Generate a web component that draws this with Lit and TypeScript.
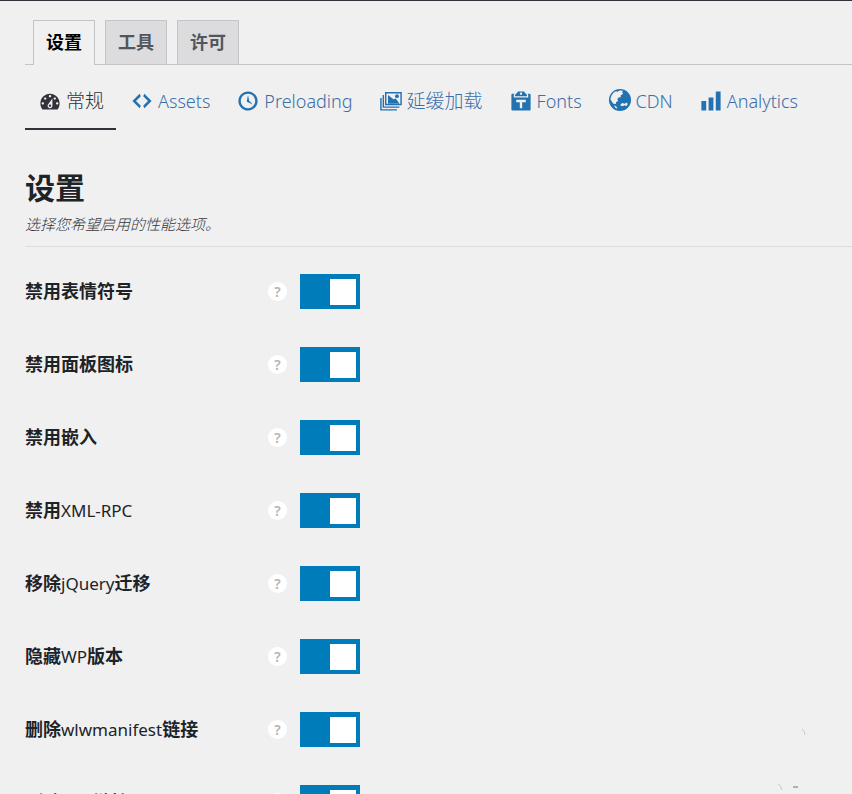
import { LitElement, html, css, svg } from "lit";
import { customElement } from "lit/decorators.js";
import { classMap } from "lit/directives/class-map.js";

const icons = {
  dashboard: svg`<path fill-rule="evenodd" d="M3.76 17h12.48C17.34 15.6 18 13.9 18 12c0-4.420-3.580-8-8-8s-8 3.580-8 8c0 1.890.66 3.630 1.760 5zM10 5c.55 0 1 .45 1 1s-.45 1-1 1-1-.45-1-1 .45-1 1-1zM6 7c.55 0 1 .45 1 1s-.45 1-1 1-1-.45-1-1 .45-1 1-1zm8 0c.55 0 1 .45 1 1s-.45 1-1 1-1-.45-1-1 .45-1 1-1zm-5.370 5.550L12 8v6c0 1.100-.9 2-2 2s-2-.9-2-2c0-.57.24-1.080.63-1.450zM4 11c.55 0 1 .45 1 1s-.45 1-1 1-1-.45-1-1 .45-1 1-1zm12 0c.55 0 1 .45 1 1s-.45 1-1 1-1-.45-1-1 .45-1 1-1zm-5 3c0-.55-.45-1-1-1s-1 .45-1 1 .45 1 1 1 1-.45 1-1z"/>`,
  code: svg`<path d="M9 6l-4 4 4 4-1 2-6-6 6-6zm2 8l4-4-4-4 1-2 6 6-6 6z"/>`,
  clock: svg`<path d="M10 2c4.420 0 8 3.580 8 8s-3.580 8-8 8-8-3.580-8-8 3.580-8 8-8zm0 14c3.310 0 6-2.690 6-6s-2.690-6-6-6-6 2.690-6 6 2.690 6 6 6zm-.71-5.290c.07.05.14.1.23.15l-.02.02L14 13l-3.030-3.190L10 5l-.97 4.810h.01c0 .02-.01.05-.02.09S9 9.970 9 10c0 .28.1.52.29.71z"/>`,
  images: svg`<path fill-rule="evenodd" d="M5 2.500h14v11H5zm1.200 1.200v8.600h11.600V3.700zM3 5h1.200v9.500H17v1.200H3zM1 7.500h1.200v9.300H15V18H1zM7.500 5l4.500 3.500 2-.5 3 4H7.500z"/><circle cx="15" cy="6" r="1.600"/>`,
  fonts: svg`<path fill-rule="evenodd" d="M12.380 2L15 5v1H5V5l2.640-3h4.740zM10 5c.55 0 1-.44 1-1 0-.55-.45-1-1-1s-1 .45-1 1c0 .56.45 1 1 1zm5.450-1H17c.55 0 1 .45 1 1v12c0 .56-.45 1-1 1H3c-.55 0-1-.44-1-1V5c0-.55.45-1 1-1h1.550L4 4.630V7h12V4.630zM14 11V9H6v2h3v5h2v-5h3z"/>`,
  globe: svg`<path fill-rule="evenodd" d="M10 0a9.200 9.200 0 1 0 0 18.400A9.200 9.200 0 0 0 10 0zM2 8.500C2.300 5.500 4 3 6.500 1.800L8 2.200 9.500 1.200l3 .3-.8 1.500 1 1-2 1.200-.2 1.600-1.800.2-1 1.500.8 1.500-1.700.8-.3 1.800-2-.3L2.800 10zM10 13.500l1.800-1.800 2.200.5 1.500-1 1 1.300-1.200 1.700-1.800-.7-1.300.8zM5 13.500l2 1 .8 2-1.500-.7z"/>`,
  chart: svg`<path d="M18 18V2h-4v16h4zm-6 0V7H8v11h4zm-6 0v-8H2v8h4z"/>`,
};

const tabs = ["设置", "工具", "许可"];

const sections: { icon: keyof typeof icons; text: string }[] = [
  { icon: "dashboard", text: "常规" },
  { icon: "code", text: "Assets" },
  { icon: "clock", text: "Preloading" },
  { icon: "images", text: "延缓加载" },
  { icon: "fonts", text: "Fonts" },
  { icon: "globe", text: "CDN" },
  { icon: "chart", text: "Analytics" },
];

const options = [
  "禁用表情符号",
  "禁用面板图标",
  "禁用嵌入",
  "禁用XML-RPC",
  "移除jQuery迁移",
  "隐藏WP版本",
  "删除wlwmanifest链接",
  "删除RSD链接",
];

@customElement("option-row")
class OptionRow extends LitElement {
  static properties = { text: { type: String } };
  declare text: string;

  static styles = css`
    :host {
      display: grid;
      grid-template-columns: 243px 19px 73px;
      align-items: center;
      height: 73px;
    }
    .name {
      padding-bottom: 1px;
      font-size: 18px;
      line-height: 24px;
      font-weight: 700;
      color: #1d2327;
    }
    .latin {
      font-size: 17px;
      font-weight: 400;
    }
    .help {
      width: 19px;
      height: 19px;
      padding: 0;
      border: 0;
      border-radius: 50%;
      background: #fff;
      color: #b4b4b4;
      font: 600 14px/19px "Noto Sans", sans-serif;
      text-align: center;
    }
    .switch {
      appearance: none;
      display: flex;
      align-items: center;
      box-sizing: border-box;
      width: 60px;
      height: 35px;
      margin: 0 0 0 13px;
      padding: 0 4px;
      background: #ccc;
    }
    .switch::before {
      content: "";
      width: 26px;
      height: 26px;
      background: #fff;
    }
    .switch:checked {
      justify-content: flex-end;
      background: #007cba;
    }
  `;

  render() {
    const parts = this.text.split(/([A-Za-z-]+)/);
    return html`
      <label class="name" for="toggle"
        >${parts.map((p, i) => (i % 2 ? html`<span class="latin">${p}</span>` : p))}</label
      >
      <button class="help" type="button">?</button>
      <input class="switch" id="toggle" type="checkbox" checked />
    `;
  }
}

@customElement("app-root")
class AppRoot extends LitElement {
  static styles = css`
    :host {
      display: block;
      position: relative;
      box-sizing: border-box;
      height: 100vh;
      overflow: hidden;
      border-top: 1px solid #32323a;
      padding: 19px 0 0 25px;
      background: #f0f0f1;
      color: #32373c;
      font-family: "Noto Sans", "Noto Sans CJK SC", sans-serif;
    }
    .tabs {
      display: flex;
      gap: 10px;
      padding-left: 8px;
      border-bottom: 1px solid #c3c4c7;
    }
    .tab {
      padding: 10px 12px;
      border: 1px solid #c3c4c7;
      border-bottom: 0;
      background: #dcdcde;
      color: #50575e;
      font-size: 18px;
      line-height: 23px;
      font-weight: 700;
      text-decoration: none;
    }
    .tab.active {
      margin-bottom: -1px;
      padding-bottom: 11px;
      background: #f0f0f1;
      color: #000;
    }
    .sections {
      display: flex;
      gap: 1px;
      margin-top: 8px;
    }
    .section {
      display: flex;
      align-items: center;
      gap: 4px;
      height: 55px;
      padding: 0 12px 0 13px;
      border-bottom: 2px solid transparent;
      color: #2271b1;
      font-size: 19px;
      line-height: 24px;
      font-weight: 300;
      text-decoration: none;
      white-space: nowrap;
    }
    .section.active {
      border-color: #32323a;
      color: #32323a;
    }
    .caption {
      color: #3b6ea8;
    }
    .active .caption {
      color: inherit;
    }
    .latin {
      font-size: 18px;
    }
    .icon {
      width: 24px;
      height: 24px;
      fill: currentColor;
    }
    .title {
      margin: 38px 0 0;
      color: #1d2327;
      font-size: 30px;
      line-height: 40px;
      font-weight: 700;
    }
    .intro {
      margin: 5px 0 0;
      padding-bottom: 11px;
      border-bottom: 1px solid #dcdcde;
      font-size: 15px;
      line-height: 22px;
      font-weight: 300;
      font-style: italic;
    }
    .options {
      padding-top: 8px;
    }
    .specks {
      position: absolute;
      right: 44px;
      bottom: 2px;
      width: 32px;
      height: 66px;
      fill: none;
      stroke: #c8c8c8;
    }
  `;

  render() {
    return html`
      <nav class="tabs">
        ${tabs.map(
          (t, i) => html`<a href="#" class=${classMap({ tab: true, active: i === 0 })}>${t}</a>`,
        )}
      </nav>
      <nav class="sections">
        ${sections.map(
          (s, i) => html`<a href="#" class=${classMap({ section: true, active: i === 0 })}>
            <svg class="icon" viewBox="0 0 20 20" aria-hidden="true">${icons[s.icon]}</svg>
            <span class=${classMap({ caption: true, latin: /^[A-Za-z]/.test(s.text) })}>${s.text}</span>
          </a>`,
        )}
      </nav>
      <main>
        <h2 class="title">设置</h2>
        <p class="intro">选择您希望启用的性能选项。</p>
        <div class="options">
          ${options.map((o) => html`<option-row .text=${o}></option-row>`)}
        </div>
      </main>
      <svg class="specks" viewBox="0 0 32 66" aria-hidden="true">
        <path d="M26 3q3 2 3 6M2 58q3 1 4 6" />
        <path d="M17 61h5" stroke="#b0b0b0" stroke-width="2" />
      </svg>
    `;
  }
}
